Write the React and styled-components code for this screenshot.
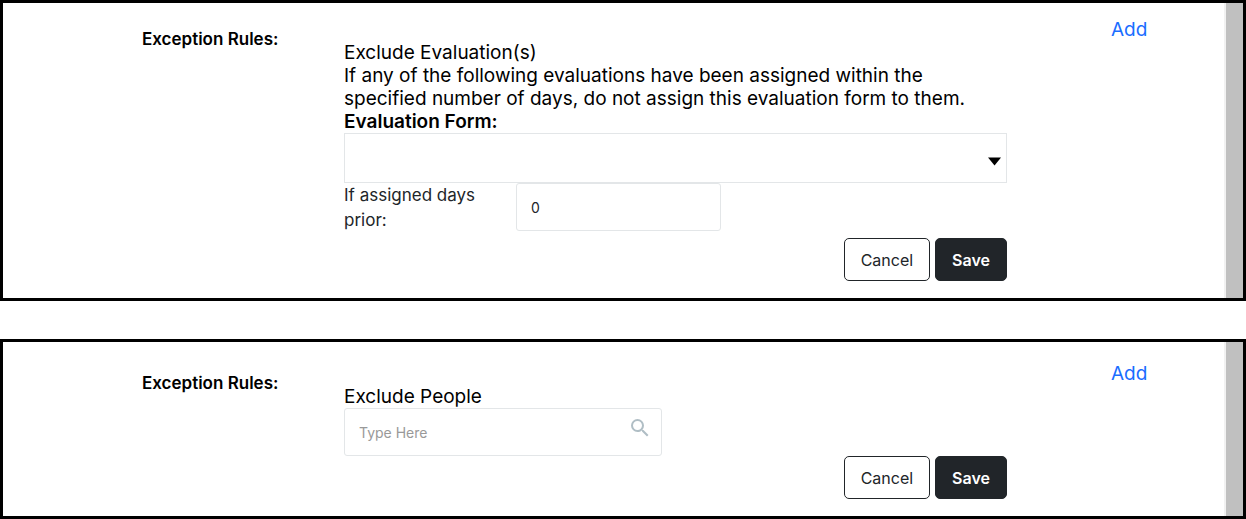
import React, { useId, useState } from 'react';
import styled, { createGlobalStyle } from 'styled-components';
import { MdSearch } from 'react-icons/md';

const colors = {
  BLACK: '#000',
  DARK: '#212529',
  WHITE: '#fff',
  LINK: '#1a6dff',
  BORDER: '#e3e6e8',
  PLACEHOLDER: '#999',
  ICON: '#b0bec5',
  SCROLL: '#c0c0c0',
  SCROLL_EDGE: '#f1f1f1',
};

// Styles

const GlobalStyle = createGlobalStyle`
  *, *::before, *::after {
    box-sizing: border-box;
  }

  body {
    margin: 0;
    background: ${colors.WHITE};
    color: ${colors.BLACK};
    font-family: Inter, 'Liberation Sans', sans-serif;
    font-size: 19px;
    line-height: 23px;
  }

  input, select, button {
    font-family: inherit;
  }
`

const Page = styled.main`
  display: flex;
  flex-direction: column;
  gap: 38px;
`

const Panel = styled.section`
  display: grid;
  grid-template-columns: 202px minmax(0, 1fr) 236px;
  padding: ${props => props.$spaced ? '5px' : '0'} 0 17px 139px;
  border: 3px solid ${colors.BLACK};
  position: relative;
`

const ScrollTrack = styled.div`
  position: absolute;
  top: 0;
  right: 0;
  bottom: 0;
  width: 19px;
  background: ${colors.SCROLL};
  border-left: 2px solid ${colors.SCROLL_EDGE};
`

const PanelLabel = styled.h2`
  margin: 0;
  padding-top: 24px;
  font-size: 17px;
  font-weight: 600;
  line-height: 25px;
`

const Form = styled.form`
  padding-top: 38px;
`

const Text = styled.p`
  margin: 0;
`

const FieldLabel = styled.label`
  display: block;
  font-weight: ${props => props.$bold ? 600 : 400};
`

const AddColumn = styled.div`
  padding: 15px 0 0 104px;
`

const AddLink = styled.a`
  color: ${colors.LINK};
  text-decoration: none;
`

const SelectWrapper = styled.div`
  position: relative;

  svg {
    position: absolute;
    right: 6px;
    top: 24px;
    pointer-events: none;
  }
`

const Select = styled.select`
  display: block;
  width: 100%;
  height: 50px;
  padding: 0 32px 0 14px;
  appearance: none;
  background: ${colors.WHITE};
  border: 1px solid ${colors.BORDER};
  border-radius: 0;
  font-size: 17px;
`

const Input = styled.input`
  display: block;
  width: ${props => props.$width};
  height: 48px;
  padding: 0 14px;
  border: 1px solid ${colors.BORDER};
  border-radius: 3px;
  color: ${colors.DARK};
  font-size: 14px;

  &::placeholder {
    color: ${colors.PLACEHOLDER};
    opacity: 1;
  }
`

const DaysRow = styled.div`
  display: flex;
  margin-bottom: 5px;
`

const DaysLabel = styled.label`
  width: 172px;
  padding-right: 32px;
  color: ${colors.DARK};
  font-size: 17px;
  line-height: 25px;
`

const SearchWrapper = styled.div`
  position: relative;
  width: 318px;

  svg {
    position: absolute;
    right: 10px;
    top: 8px;
    color: ${colors.ICON};
    pointer-events: none;
  }
`

const ButtonRow = styled.div`
  display: flex;
  justify-content: flex-end;
  gap: 5px;
`

const Button = styled.button`
  height: 43px;
  padding: 0 16px;
  background: ${props => props.$primary ? colors.DARK : colors.WHITE};
  color: ${props => props.$primary ? colors.WHITE : colors.DARK};
  border: 1px solid ${colors.DARK};
  border-radius: 5px;
  font-size: 16px;
  font-weight: ${props => props.$primary ? 600 : 400};
  cursor: pointer;
`

const ExceptionRules = ({ spaced, children }) => (
  <Panel $spaced={spaced}>
    <PanelLabel>Exception Rules:</PanelLabel>
    <Form onSubmit={e => e.preventDefault()}>
      {children}
      <ButtonRow>
        <Button type="button">Cancel</Button>
        <Button type="submit" $primary>Save</Button>
      </ButtonRow>
    </Form>
    <AddColumn>
      <AddLink href="#add">Add</AddLink>
    </AddColumn>
    <ScrollTrack />
  </Panel>
)

const ExcludeEvaluations = () => {
  const [days, setDays] = useState('0');
  const id = useId();

  return (
    <ExceptionRules>
      <Text>Exclude Evaluation(s)</Text>
      <Text>
        If any of the following evaluations have been assigned within the
        specified number of days, do not assign this evaluation form to them.
      </Text>
      <FieldLabel htmlFor={`${id}-form`} $bold>Evaluation Form:</FieldLabel>
      <SelectWrapper>
        <Select id={`${id}-form`} defaultValue="">
          <option value=""></option>
        </Select>
        <svg width="13" height="9" viewBox="0 0 13 9">
          <path d="M0 0.5H13L6.5 8.5Z" fill={colors.BLACK} />
        </svg>
      </SelectWrapper>
      <DaysRow>
        <DaysLabel htmlFor={`${id}-days`}>If assigned days prior:</DaysLabel>
        <Input
          id={`${id}-days`}
          type="text"
          inputMode="numeric"
          $width="205px"
          value={days}
          onChange={e => setDays(e.target.value)}
        />
      </DaysRow>
    </ExceptionRules>
  )
}

const ExcludePeople = () => {
  const [query, setQuery] = useState('');
  const id = useId();

  return (
    <ExceptionRules spaced>
      <FieldLabel htmlFor={id}>Exclude People</FieldLabel>
      <SearchWrapper>
        <Input
          id={id}
          type="text"
          placeholder="Type Here"
          $width="100%"
          value={query}
          onChange={e => setQuery(e.target.value)}
        />
        <MdSearch size={24} />
      </SearchWrapper>
    </ExceptionRules>
  )
}

const App = () => (
  <>
    <GlobalStyle />
    <Page>
      <ExcludeEvaluations />
      <ExcludePeople />
    </Page>
  </>
)

export default App;
